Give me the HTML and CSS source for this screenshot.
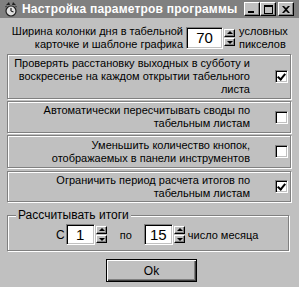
FILE: index.html
```html
<!DOCTYPE html>
<html lang="ru">
<head>
    <meta charset="UTF-8">
    <title>Настройка параметров программы</title>
    <link rel="stylesheet" href="styles.css">
</head>
<body>
<div class="window">
    <div class="titlebar">
        <svg class="app-icon" width="16" height="16" viewBox="0 0 16 16">
            <circle cx="8" cy="10" r="5" fill="#e0e0e0" stroke="#202020" stroke-width="1.2"/>
            <path d="M8 10 L8 7 M8 10 L10.5 11" stroke="#202020" stroke-width="1.2" fill="none"/>
            <path d="M3 4 L6 1 L7 4 Z M13 4 L10 1 L9 4 Z" fill="#202020"/>
            <path d="M2 6 L4 5 M14 6 L12 5" stroke="#404040" stroke-width="1"/>
        </svg>
        <span class="title">Настройка параметров программы</span>
        <div class="tb-buttons">
            <span class="tb-btn"><svg width="8" height="7" viewBox="0 0 8 7"><rect x="0" y="5" width="6" height="2" fill="#000"/></svg></span>
            <span class="tb-btn"><svg width="9" height="9" viewBox="0 0 9 9"><rect x="0.5" y="1.5" width="8" height="7" fill="none" stroke="#000"/><rect x="0" y="0" width="9" height="2" fill="#000"/></svg></span>
            <span class="tb-btn close"><svg width="8" height="7" viewBox="0 0 8 7"><path d="M0 0 L2 0 L4 2 L6 0 L8 0 L5 3.5 L8 7 L6 7 L4 5 L2 7 L0 7 L3 3.5 Z" fill="#000"/></svg></span>
        </div>
    </div>

    <div class="content">
        <div class="width-row">
            <div class="width-label">Ширина колонки дня в табельной<br>карточке и шаблоне графика</div>
            <div class="spin wide">
                <div class="edit">70</div>
                <div class="arrows">
                    <span class="arr up"></span>
                    <span class="arr down"></span>
                </div>
            </div>
            <div class="units">условных<br>пикселов</div>
        </div>

        <div class="option tall">
            <div class="option-text">Проверять расстановку выходных в субботу и<br>воскресенье на каждом открытии табельного<br>листа</div>
            <span class="check checked"></span>
        </div>
        <div class="option h32">
            <div class="option-text">Автоматически пересчитывать своды по<br>табельным листам</div>
            <span class="check"></span>
        </div>
        <div class="option h34">
            <div class="option-text">Уменьшить количество кнопок,<br>отображаемых в панели инструментов</div>
            <span class="check"></span>
        </div>
        <div class="option h31">
            <div class="option-text">Ограничить период расчета итогов по<br>табельным листам</div>
            <span class="check checked"></span>
        </div>

        <div class="group">
            <span class="legend">Рассчитывать итоги</span>
            <div class="range-row">
                <span class="lbl-from">С</span>
                <div class="spin narrow">
                    <div class="edit">1</div>
                    <div class="arrows">
                        <span class="arr up"></span>
                        <span class="arr down"></span>
                    </div>
                </div>
                <span class="lbl-to">по</span>
                <div class="spin narrow">
                    <div class="edit">15</div>
                    <div class="arrows">
                        <span class="arr up"></span>
                        <span class="arr down"></span>
                    </div>
                </div>
                <span class="lbl-month">число месяца</span>
            </div>
        </div>

        <div class="footer">
            <button class="ok">Ok</button>
        </div>
    </div>
</div>
</body>
</html>
```

FILE: styles.css
```css
html, body{
    margin:0;
    padding:0;
    background:#c0c0c0;
}
.window{
    width:299px;
    height:287px;
    background:#c0c0c0;
    font-family:"Liberation Sans", Arial, sans-serif;
    font-size:11px;
    color:#000;
    overflow:hidden;
}
.titlebar{
    height:18px;
    background:#808080;
    display:flex;
    align-items:center;
    padding-left:3px;
}
.app-icon{
    flex:none;
}
.title{
    margin-left:3px;
    color:#fff;
    font-weight:bold;
    font-size:12px;
    letter-spacing:0.2px;
    white-space:nowrap;
    flex:1;
}
.tb-buttons{
    display:flex;
    margin-right:5px;
}
.tb-btn{
    width:16px;
    height:14px;
    box-sizing:border-box;
    background:#c0c0c0;
    border-top:1px solid #fff;
    border-left:1px solid #fff;
    border-right:1px solid #000;
    border-bottom:1px solid #000;
    box-shadow:inset -1px -1px #808080;
    display:flex;
    align-items:center;
    justify-content:center;
}
.tb-btn.close{
    margin-left:2px;
}
.content{
    padding:6px 0 0 7px;
}
.width-row{
    display:flex;
    align-items:center;
    height:27px;
}
.width-label{
    width:176px;
    text-align:right;
    line-height:13px;
}
.spin{
    display:flex;
    align-items:center;
}
.edit{
    box-sizing:border-box;
    background:#fff;
    border-top:1px solid #808080;
    border-left:1px solid #808080;
    border-right:1px solid #fff;
    border-bottom:1px solid #fff;
    box-shadow:inset 1px 1px #000, inset -1px -1px #c0c0c0;
    text-align:center;
    font-size:15px;
    display:flex;
    align-items:center;
    justify-content:center;
}
.spin.wide{
    margin-left:3px;
}
.spin.wide .edit{
    width:37px;
    height:22px;
}
.spin.narrow .edit{
    width:29px;
    height:21px;
}
.arrows{
    display:flex;
    flex-direction:column;
    gap:1px;
    margin-left:1px;
}
.arr{
    width:11px;
    height:8px;
    box-sizing:border-box;
    background:#c0c0c0;
    border-top:1px solid #fff;
    border-left:1px solid #fff;
    border-right:1px solid #000;
    border-bottom:1px solid #000;
    box-shadow:inset -1px -1px #808080;
    position:relative;
}
.arr::after{
    content:"";
    position:absolute;
    left:2px;
    width:0;
    height:0;
    border-left:3px solid transparent;
    border-right:3px solid transparent;
}
.arr.up::after{
    top:1px;
    border-bottom:3px solid #000;
}
.arr.down::after{
    top:2px;
    border-top:3px solid #000;
}
.units{
    margin-left:4px;
    line-height:13px;
}
.option{
    width:284px;
    box-sizing:border-box;
    border:1px solid #808080;
    box-shadow:inset 1px 1px #fff, 1px 1px #fff;
    display:flex;
    align-items:center;
    margin-top:2px;
}
.option.tall{
    margin-top:3px;
    height:45px;
}
.option.h32{
    height:32px;
}
.option.h34{
    height:33px;
}
.option.h31{
    height:31px;
    margin-top:3px;
}
.option-text{
    width:236px;
    margin-left:6px;
    text-align:right;
    line-height:13px;
}
.check{
    width:13px;
    height:13px;
    box-sizing:border-box;
    margin-left:25px;
    background:#fff;
    border-top:1px solid #808080;
    border-left:1px solid #808080;
    border-right:1px solid #fff;
    border-bottom:1px solid #fff;
    box-shadow:inset 1px 1px #000, inset -1px -1px #c0c0c0;
    position:relative;
}
.check.checked::after{
    content:"";
    position:absolute;
    left:3px;
    top:1px;
    width:3px;
    height:6px;
    border-right:2px solid #000;
    border-bottom:2px solid #000;
    transform:rotate(40deg);
}
.group{
    width:282px;
    height:36px;
    box-sizing:border-box;
    margin-top:13px;
    border:1px solid #808080;
    box-shadow:inset 1px 1px #fff, 1px 1px #fff;
    position:relative;
}
.legend{
    position:absolute;
    left:8px;
    top:-8px;
    padding:0 2px;
    background:#c0c0c0;
    line-height:14px;
    font-size:12px;
}
.range-row{
    display:flex;
    align-items:center;
    margin-top:8px;
    padding-left:48px;
}
.spin.narrow{
    margin-left:1px;
}
.lbl-from{
    font-size:12px;
}
.lbl-to{
    margin-left:13px;
    margin-right:11px;
}
.lbl-month{
    margin-left:3px;
}
.footer{
    margin-top:8px;
    padding-left:99px;
}
.ok{
    width:91px;
    height:23px;
    box-sizing:border-box;
    font-family:"Liberation Sans", Arial, sans-serif;
    font-size:12px;
    background:#c0c0c0;
    border:1px solid #000;
    box-shadow:inset 1px 1px #fff, inset -1px -1px #404040, inset -2px -2px #808080;
    padding:0;
}
```
